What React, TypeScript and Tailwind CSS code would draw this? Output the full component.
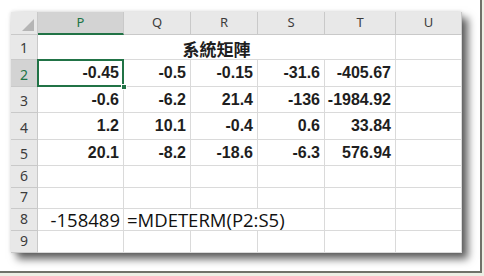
import React from "react";

const cols = ["P", "Q", "R", "S", "T", "U"];
const data: string[][] = [
  ["-0.45", "-0.5", "-0.15", "-31.6", "-405.67"],
  ["-0.6", "-6.2", "21.4", "-136", "-1984.92"],
  ["1.2", "10.1", "-0.4", "0.6", "33.84"],
  ["20.1", "-8.2", "-18.6", "-6.3", "576.94"],
];
const rowH = ["h-[25px]", "h-[27px]", "h-[26px]", "h-[27px]", "h-[26px]", "h-[22px]", "h-[21px]", "h-[22px]", "h-[22px]"];

const hdrFont = { fontFamily: '"Noto Sans", "Open Sans", sans-serif' };
const numFont = { fontFamily: '"Liberation Sans", Arial, sans-serif' };
const bigFont = { fontFamily: '"Open Sans", "Noto Sans", sans-serif' };

function RowHeader({ n, h, sel }: { n: number; h: string; sel?: boolean }) {
  return (
    <div
      className={`${h} flex items-end justify-center pb-[1px] border-r border-b border-[#c9c9c9] text-[14px] ${
        sel ? "bg-[#d3d3d3] text-[#217346]" : "bg-[#e8e8e8] text-[#3c3c3c]"
      }`}
      style={hdrFont}
    >
      {n}
    </div>
  );
}

function Cell({ children, h, extra = "", span = "" }: { children?: React.ReactNode; h: string; extra?: string; span?: string }) {
  return <div className={`${h} ${span} border-r border-b border-[#dadada] bg-white ${extra}`}>{children}</div>;
}

export default function App() {
  return (
    <div className="w-[484px] h-[276px] bg-[#eceee4] overflow-hidden">
      <div className="w-[482px] h-[273px] bg-white border-r-2 border-b-2 border-[#6f7169] pl-[11px] pt-[12px]">
        <div className="w-[451px] shadow-[6px_6px_8px_rgba(0,0,0,0.62),0_0_4px_rgba(0,0,0,0.15)]">
          <div className="grid grid-cols-[27px_86px_67px_67px_67px_71px_66px]">
            {/* header row */}
            <div className="h-[23px] bg-[#e8e8e8] border-r border-b border-[#c9c9c9] relative">
              <svg className="absolute right-[3px] bottom-[3px]" width="12" height="12" viewBox="0 0 12 12">
                <polygon points="12,0 12,12 0,12" fill="#b5b5b5" />
              </svg>
            </div>
            {cols.map((c, i) => (
              <div
                key={c}
                className={`h-[23px] flex items-center justify-center text-[13px] border-r ${
                  i === 0
                    ? "bg-[#d3d3d3] text-[#217346] border-b-2 border-b-[#217346] border-r-[#c9c9c9]"
                    : "bg-[#e8e8e8] text-[#3c3c3c] border-b border-[#c9c9c9]"
                }`}
                style={hdrFont}
              >
                {c}
              </div>
            ))}

            {/* row 1 */}
            <RowHeader n={1} h={rowH[0]} />
            <Cell h={rowH[0]} span="col-span-5" extra="flex items-end justify-center pb-[2px]">
              <span
                className="text-[17px] font-bold text-[#1e1e1e] leading-none"
                style={{ fontFamily: '"Noto Sans CJK TC", "Noto Sans CJK SC", sans-serif' }}
              >
                系統矩陣
              </span>
            </Cell>
            <Cell h={rowH[0]} />

            {/* rows 2-5 */}
            {data.map((row, r) => (
              <React.Fragment key={r}>
                <RowHeader n={r + 2} h={rowH[r + 1]} sel={r === 0} />
                {row.map((v, c) => (
                  <Cell
                    key={c}
                    h={rowH[r + 1]}
                    extra={`flex items-center justify-end pr-[4px] text-[16px] font-bold text-[#1e1e1e] ${r === 0 && c === 0 ? "relative" : ""}`}
                  >
                    <span style={numFont}>{v}</span>
                    {r === 0 && c === 0 && (
                      <>
                        <div className="absolute -left-px -top-px -right-px -bottom-px border-2 border-[#217346]" />
                        <div className="absolute -right-[4px] -bottom-[4px] w-[6px] h-[6px] bg-[#217346] border border-white" />
                      </>
                    )}
                  </Cell>
                ))}
                <Cell h={rowH[r + 1]} />
              </React.Fragment>
            ))}

            {/* rows 6-7 */}
            {[5, 6].map((ri) => (
              <React.Fragment key={ri}>
                <RowHeader n={ri + 1} h={rowH[ri]} />
                {cols.map((c) => (
                  <Cell key={c} h={rowH[ri]} />
                ))}
              </React.Fragment>
            ))}

            {/* row 8 */}
            <RowHeader n={8} h={rowH[7]} />
            <Cell h={rowH[7]} extra="flex items-center justify-end pr-[3px] text-[18.5px] font-medium text-[#111]">
              <span style={bigFont}>-158489</span>
            </Cell>
            <Cell h={rowH[7]} span="col-span-3" extra="flex items-center pl-[3px] text-[18.5px] font-medium text-[#111]">
              <span style={bigFont}>=MDETERM(P2:S5)</span>
            </Cell>
            <Cell h={rowH[7]} />
            <Cell h={rowH[7]} />

            {/* row 9 */}
            <RowHeader n={9} h={rowH[8]} />
            {cols.map((c) => (
              <Cell key={c} h={rowH[8]} />
            ))}
          </div>
        </div>
      </div>
    </div>
  );
}
